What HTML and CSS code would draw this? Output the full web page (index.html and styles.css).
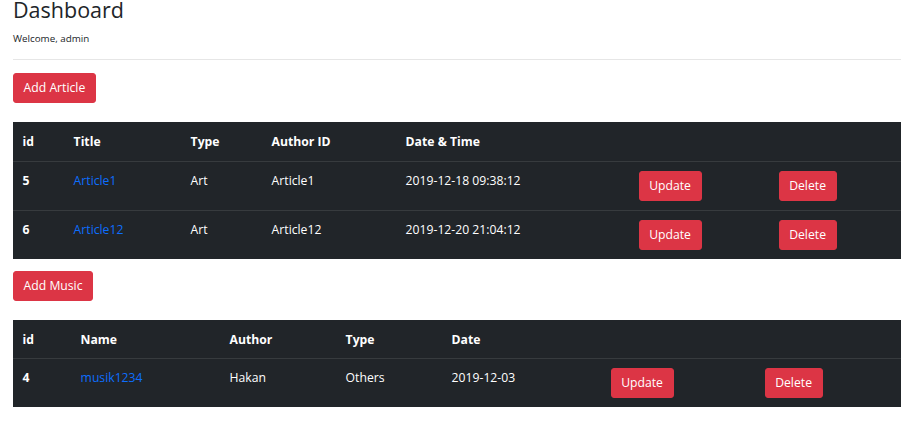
FILE: index.html
```html
<!DOCTYPE html>
<html>
<head>
<meta charset="utf-8">
<link rel="stylesheet" href="styles.css">
</head>
<body>
<div class="page">
  <h3 class="title">Dashboard</h3>
  <p class="welcome"><small>Welcome, admin</small></p>
  <hr class="rule">
  <div class="action first"><button class="btn">Add Article</button></div>
  <table class="grid articles">
    <colgroup>
      <col class="c1"><col class="c2"><col class="c3"><col class="c4"><col class="c5"><col class="c6"><col class="c7">
    </colgroup>
    <thead>
      <tr><th>id</th><th>Title</th><th>Type</th><th>Author ID</th><th>Date &amp; Time</th><th></th><th></th></tr>
    </thead>
    <tbody>
      <tr><th>5</th><td><a href="#">Article1</a></td><td>Art</td><td>Article1</td><td>2019-12-18 09:38:12</td><td><button class="btn">Update</button></td><td><button class="btn">Delete</button></td></tr>
      <tr><th>6</th><td><a href="#">Article12</a></td><td>Art</td><td>Article12</td><td>2019-12-20 21:04:12</td><td><button class="btn">Update</button></td><td><button class="btn">Delete</button></td></tr>
    </tbody>
  </table>
  <div class="action second"><button class="btn">Add Music</button></div>
  <table class="grid music">
    <colgroup>
      <col class="c1"><col class="c2"><col class="c3"><col class="c4"><col class="c5"><col class="c6"><col class="c7">
    </colgroup>
    <thead>
      <tr><th>id</th><th>Name</th><th>Author</th><th>Type</th><th>Date</th><th></th><th></th></tr>
    </thead>
    <tbody>
      <tr><th>4</th><td><a href="#">musik1234</a></td><td>Hakan</td><td>Others</td><td>2019-12-03</td><td><button class="btn">Update</button></td><td><button class="btn">Delete</button></td></tr>
    </tbody>
  </table>
</div>
</body>
</html>
```

FILE: styles.css
```css
html, body {
  margin: 0;
  padding: 0;
  background: #fff;
}
body {
  font-family: "Open Sans", "Noto Sans", sans-serif;
  font-size: 12.2px;
  line-height: 1.5;
  color: #212529;
}
.page {
  padding: 0 19px 0 13px;
}
.title {
  margin: -3px 0 0;
  font-size: 21.5px;
  font-weight: 500;
  line-height: 1.2;
}
.welcome {
  margin: 8px 0 0;
  line-height: 1.2;
}
.welcome small {
  font-size: 9.8px;
}
.rule {
  margin: 14px 0 0;
  border: 0;
  border-top: 1px solid #e6e6e6;
  height: 0;
}
.action.first {
  margin-top: 13px;
  margin-bottom: 19px;
}
.action.second {
  margin-top: 12px;
  margin-bottom: 19px;
}
.btn {
  display: inline-block;
  font-family: inherit;
  font-size: 12.2px;
  line-height: 18px;
  height: 30px;
  padding: 5px 9.6px;
  color: #fff;
  background: #dc3545;
  border: 1px solid #dc3545;
  border-radius: 3px;
  cursor: pointer;
  vertical-align: top;
}
.grid {
  width: 888px;
  table-layout: fixed;
  border-collapse: collapse;
  background: #212529;
  color: #fff;
}
.grid th, .grid td {
  padding: 9px 9.6px;
  line-height: 19.2px;
  text-align: left;
  vertical-align: top;
  border-top: 1px solid #373b3e;
}
.grid thead th {
  border-top: 0;
  border-bottom: 1px solid #373b3e;
  padding: 10px 9.6px 9px;
}
.grid tbody tr:first-child th, .grid tbody tr:first-child td {
  border-top: 0;
}
.grid th {
  font-weight: 700;
}
.grid a {
  color: #0d6efd;
  text-decoration: none;
}
.articles .c1 { width: 51px; }
.articles .c2 { width: 117px; }
.articles .c3 { width: 81px; }
.articles .c4 { width: 134px; }
.articles .c5 { width: 233px; }
.articles .c6 { width: 140px; }
.articles .c7 { width: 132px; }
.music .c1 { width: 58px; }
.music .c2 { width: 149px; }
.music .c3 { width: 116px; }
.music .c4 { width: 106px; }
.music .c5 { width: 159px; }
.music .c6 { width: 154px; }
.music .c7 { width: 146px; }
```
